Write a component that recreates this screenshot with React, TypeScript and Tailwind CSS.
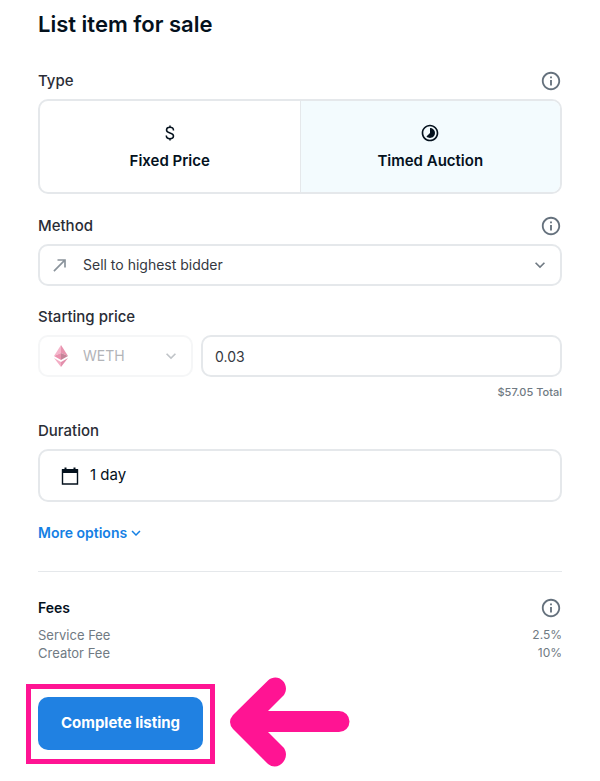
import type { ReactNode } from "react";
import { MdCallMade, MdExpandMore, MdInfoOutline, MdTimelapse } from "react-icons/md";

function FieldHeader({ children, info }: { children: ReactNode; info?: string }) {
  return (
    <div className="mb-1.5 flex h-6 items-center justify-between text-[15px] font-medium text-[#2a2d36]">
      {children}
      {info && (
        <button type="button" aria-label={info} className="text-[#65717d]">
          <MdInfoOutline className="size-[22px]" />
        </button>
      )}
    </div>
  );
}

function TypeOption({
  icon,
  label,
  checked,
}: {
  icon: ReactNode;
  label: string;
  checked?: boolean;
}) {
  return (
    <label className="flex flex-1 cursor-pointer flex-col items-center justify-center gap-2 border-[#e5e8eb] text-[15px] leading-5 font-semibold text-[#04111d] first:border-r has-checked:bg-[#f3fbfe]">
      <input type="radio" name="type" defaultChecked={checked} className="sr-only" />
      {icon}
      {label}
    </label>
  );
}

function DollarIcon() {
  return (
    <svg
      viewBox="0 0 20 20"
      className="size-5"
      fill="none"
      stroke="currentColor"
      strokeWidth="1.5"
      aria-hidden="true"
    >
      <path d="M13.500 7.500C13.500 5.300 12 4.300 10 4.300S6.500 5.300 6.500 7c0 4 7 2 7 6 0 1.700-1.500 2.700-3.500 2.700s-3.700-1-3.700-3.200M10 2.500v2M10 15.500v2" />
    </svg>
  );
}

function CalendarIcon() {
  return (
    <svg viewBox="0 0 20 20" className="size-5" aria-hidden="true">
      <path d="M2.500 4h15v14h-15z" fill="none" stroke="currentColor" strokeWidth="1.400" />
      <path d="M2 3h16v4H2zM4.500 1.500h2V4h-2zM13.500 1.500h2V4h-2z" fill="currentColor" />
    </svg>
  );
}

function EthIcon() {
  return (
    <svg viewBox="0 0 14 22" className="h-[22px] w-3.5" aria-hidden="true">
      <path d="M7 0 0 11l7-3z" fill="#f5b5cb" />
      <path d="m7 0 7 11-7-3z" fill="#e893ae" />
      <path d="m0 11 7-3v7z" fill="#eb91ae" />
      <path d="m14 11-7-3v7z" fill="#c58398" />
      <path d="m0 13 7 4v5z" fill="#f3aec5" />
      <path d="m14 13-7 4v5z" fill="#e38fac" />
    </svg>
  );
}

export default function App() {
  return (
    <main className="min-h-screen bg-white px-[38px] pt-2 pb-3.5 font-['Inter','Liberation_Sans',sans-serif] text-[#04111d]">
      <h1 className="text-[22px] leading-8 font-semibold">List item for sale</h1>

      <section className="mt-[29px]">
        <FieldHeader info="About listing types">
          <h2>Type</h2>
        </FieldHeader>
        <div
          role="radiogroup"
          aria-label="Type"
          className="flex h-[95px] overflow-hidden rounded-[10px] border-2 border-[#e5e8eb]"
        >
          <TypeOption icon={<DollarIcon />} label="Fixed Price" />
          <TypeOption icon={<MdTimelapse className="size-5" />} label="Timed Auction" checked />
        </div>
      </section>

      <section className="mt-5">
        <FieldHeader info="About sale methods">
          <label htmlFor="method">Method</label>
        </FieldHeader>
        <div className="relative">
          <select
            id="method"
            className="block h-[42px] w-full appearance-none rounded-[10px] border-2 border-[#e5e8eb] bg-white pl-[43px] text-sm text-[#353840]"
          >
            <option>Sell to highest bidder</option>
          </select>
          <MdCallMade className="pointer-events-none absolute inset-y-0 left-3 my-auto size-5 text-[#8a939b]" />
          <MdExpandMore className="pointer-events-none absolute inset-y-0 right-3 my-auto size-5 text-[#707a83]" />
        </div>
      </section>

      <section className="mt-[19px]">
        <FieldHeader>
          <label htmlFor="price">Starting price</label>
        </FieldHeader>
        <div className="flex gap-2">
          <div className="relative w-[155px]">
            <select
              aria-label="Currency"
              disabled
              className="block h-[42px] w-full appearance-none rounded-[10px] border-2 border-[#f5f6f7] bg-white pl-[43px] text-sm text-[#b2b4b8] opacity-100"
            >
              <option>WETH</option>
            </select>
            <span className="pointer-events-none absolute inset-y-0 left-4 flex items-center">
              <EthIcon />
            </span>
            <MdExpandMore className="pointer-events-none absolute inset-y-0 right-3 my-auto size-5 text-[#c0c4c8]" />
          </div>
          <input
            id="price"
            defaultValue="0.03"
            className="h-[42px] min-w-0 flex-1 rounded-[10px] border-2 border-[#e5e8eb] px-3 text-sm text-[#353840]"
          />
        </div>
        <p className="mt-[7px] text-right text-[11px] leading-4 font-medium text-[#707a83]">
          $57.05 Total
        </p>
      </section>

      <section className="mt-[19px]">
        <FieldHeader>
          <h2>Duration</h2>
        </FieldHeader>
        <button
          type="button"
          className="flex h-[53px] w-full items-center gap-2.5 rounded-[10px] border-2 border-[#e5e8eb] px-5 text-[15px]"
        >
          <CalendarIcon />
          1 day
        </button>
      </section>

      <button
        type="button"
        className="mt-5 flex h-[22px] items-center text-sm font-semibold text-[#1580e4]"
      >
        More options
        <MdExpandMore className="size-[18px]" />
      </button>

      <hr className="mt-[27px] border-[#e5e8eb]" />

      <section className="mt-6">
        <FieldHeader info="About fees">
          <h2 className="text-sm font-semibold text-[#04111d]">Fees</h2>
        </FieldHeader>
        <dl className="text-[13px] leading-[18px] text-[#707a83]">
          <div className="flex justify-between">
            <dt>Service Fee</dt>
            <dd className="text-xs leading-[18px]">2.5%</dd>
          </div>
          <div className="flex justify-between">
            <dt>Creator Fee</dt>
            <dd className="text-xs leading-[18px]">10%</dd>
          </div>
        </dl>
      </section>

      <div className="mt-[15px] -ml-3 flex gap-[15px]">
        <div className="mt-[7px] h-20 border-[5px] border-[#ff1493] px-[7px] py-2">
          <button
            type="button"
            className="h-[53px] w-[165px] rounded-[10px] bg-[#2081e2] text-[15px] font-bold text-white"
          >
            Complete listing
          </button>
        </div>
        <svg viewBox="0 0 120 90" className="h-[90px] w-[120px]" aria-hidden="true">
          <path
            d="M3 38 38 3.500C48-5 61 7 54 18L38 34h71a10.500 10.500 0 0 1 0 21H38l16 16c7 11-6 24-16 16L3 52q-6-7 0-14z"
            fill="#ff1493"
          />
        </svg>
      </div>
    </main>
  );
}
